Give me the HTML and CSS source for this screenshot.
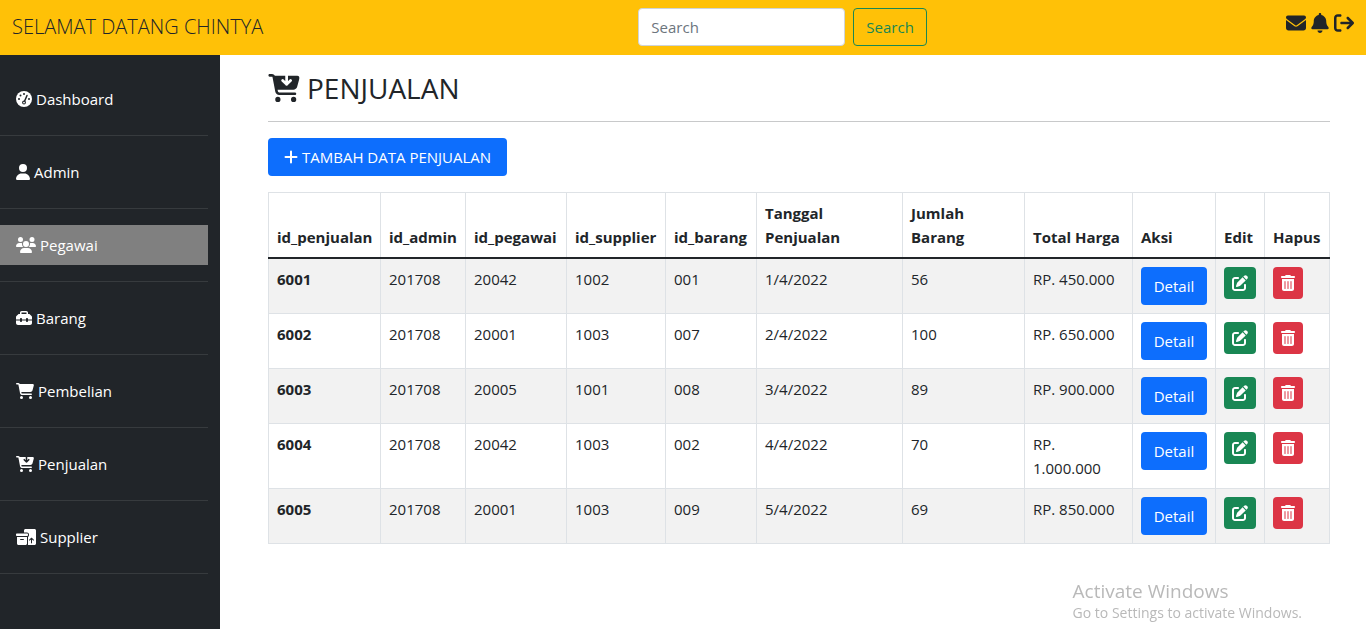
FILE: index.html
```html
<!DOCTYPE html>
<html lang="id">
<head>
<meta charset="utf-8">
<meta name="viewport" content="width=device-width, initial-scale=1">
<title>Penjualan</title>
<link rel="stylesheet" href="styles.css">
</head>
<body>
<svg class="sprite" aria-hidden="true">
  <defs>
    <mask id="arrow-cut">
      <rect width="576" height="512" fill="#fff"/>
      <path d="M336 -10V190M264 118l72 72 72-72" fill="none" stroke="#000" stroke-width="50" stroke-linecap="round" stroke-linejoin="round"/>
    </mask>
    <mask id="gauge-cut">
      <rect width="512" height="512" fill="#fff"/>
      <circle cx="256" cy="96" r="32"/><circle cx="144" cy="144" r="32"/><circle cx="96" cy="256" r="32"/><circle cx="416" cy="256" r="32"/>
      <circle cx="256" cy="368" r="62"/>
      <path d="M256 368L352 144" stroke="#000" stroke-width="48" stroke-linecap="round"/>
    </mask>
  </defs>
  <symbol id="envelope" viewBox="0 0 512 512"><path d="M48 64C21.5 64 0 85.5 0 112c0 15.1 7.1 29.3 19.2 38.4L236.8 313.6c11.4 8.5 27 8.5 38.4 0L492.8 150.4c12.1-9.1 19.2-23.3 19.2-38.4c0-26.5-21.5-48-48-48H48zM0 176V384c0 35.3 28.7 64 64 64H448c35.3 0 64-28.7 64-64V176L294.4 339.2c-22.8 17.1-54 17.1-76.8 0L0 176z"/></symbol>
  <symbol id="bell" viewBox="0 0 448 512"><path d="M224 0c-17.7 0-32 14.3-32 32V51.2C119 66 64 130.6 64 208v18.8c0 47-17.3 92.4-48.5 127.6l-7.4 8.3c-8.4 9.4-10.4 22.9-5.3 34.4S19.4 416 32 416H416c12.6 0 24-7.4 29.2-18.9s3.1-25-5.3-34.4l-7.4-8.3C401.3 319.2 384 273.9 384 226.8V208c0-77.4-55-142-128-156.8V32c0-17.7-14.3-32-32-32zm45.3 493.3c12-12 18.7-28.3 18.7-45.3H160c0 17 6.7 33.3 18.7 45.3s28.3 18.7 45.3 18.7s33.3-6.7 45.3-18.7z"/></symbol>
  <symbol id="sign-out" viewBox="0 0 512 512"><path d="M502.6 278.6c12.5-12.5 12.5-32.8 0-45.3l-128-128c-12.5-12.5-32.8-12.5-45.3 0s-12.5 32.8 0 45.3L402.7 224 192 224c-17.7 0-32 14.3-32 32s14.3 32 32 32l210.7 0-73.4 73.4c-12.5 12.5-12.5 32.8 0 45.3s32.8 12.5 45.3 0l128-128zM160 96c17.7 0 32-14.3 32-32s-14.3-32-32-32L96 32C43 32 0 75 0 128L0 384c0 53 43 96 96 96l64 0c17.7 0 32-14.3 32-32s-14.3-32-32-32l-64 0c-17.7 0-32-14.3-32-32l0-256c0-17.7 14.3-32 32-32l64 0z"/></symbol>
  <symbol id="gauge" viewBox="0 0 512 512"><circle cx="256" cy="256" r="256" mask="url(#gauge-cut)"/><circle cx="256" cy="368" r="28"/></symbol>
  <symbol id="user" viewBox="0 0 448 512"><path d="M224 256A128 128 0 1 0 224 0a128 128 0 1 0 0 256zm-45.7 48C79.8 304 0 383.8 0 482.3C0 498.7 13.3 512 29.7 512H418.3c16.4 0 29.7-13.3 29.7-29.7C448 383.8 368.2 304 269.7 304H178.3z"/></symbol>
  <symbol id="users" viewBox="0 0 640 512"><path d="M144 0a80 80 0 1 1 0 160A80 80 0 1 1 144 0zM512 0a80 80 0 1 1 0 160A80 80 0 1 1 512 0zM0 298.7C0 239.8 47.8 192 106.7 192h42.7c15.9 0 31 3.5 44.6 9.7c-1.3 7.2-1.9 14.7-1.9 22.3c0 38.2 16.8 72.5 43.3 96H21.3C9.6 320 0 310.4 0 298.7zM405.3 320c26-23.5 42.6-57.8 42.6-96c0-7.6-.7-15-1.9-22.3c13.6-6.3 28.7-9.7 44.6-9.7h42.7C592.2 192 640 239.8 640 298.7c0 11.8-9.6 21.3-21.3 21.3H405.3zM224 224a96 96 0 1 1 192 0 96 96 0 1 1 -192 0zM128 485.3C128 411.7 187.7 352 261.3 352H378.7C452.3 352 512 411.7 512 485.3c0 14.7-11.9 26.7-26.7 26.7H154.7c-14.7 0-26.7-11.9-26.7-26.7z"/></symbol>
  <symbol id="toolbox" viewBox="0 0 512 512"><path d="M176 88v40H336V88c0-4.4-3.6-8-8-8H184c-4.4 0-8 3.6-8 8zm-48 40V88c0-30.9 25.1-56 56-56H328c30.9 0 56 25.1 56 56v40h28.1c12.7 0 24.9 5.1 33.9 14.1l51.9 51.9c9 9 14.1 21.2 14.1 33.9V304H384V288c0-17.7-14.3-32-32-32s-32 14.3-32 32v16H192V288c0-17.7-14.3-32-32-32s-32 14.3-32 32v16H0V227.9c0-12.7 5.1-24.9 14.1-33.9l51.9-51.9c9-9 21.2-14.1 33.9-14.1H128zM0 416V336H128v16c0 17.7 14.3 32 32 32s32-14.3 32-32V336H320v16c0 17.7 14.3 32 32 32s32-14.3 32-32V336H512v80c0 35.3-28.7 64-64 64H64c-35.3 0-64-28.7-64-64z"/></symbol>
  <symbol id="cart" viewBox="0 0 576 512"><path d="M0 24C0 10.7 10.7 0 24 0H69.5c22 0 41.5 12.8 50.6 32h411c26.3 0 45.5 25 38.6 50.4l-41 152.3c-8.5 31.4-37 53.3-69.5 53.3H170.7l5.4 28.5c2.2 11.3 12.1 19.5 23.6 19.5H488c13.3 0 24 10.7 24 24s-10.7 24-24 24H199.7c-34.6 0-64.3-24.6-70.7-58.5L77.4 54.5c-.7-3.8-4-6.5-7.9-6.5H24C10.7 48 0 37.3 0 24zM128 464a48 48 0 1 1 96 0 48 48 0 1 1 -96 0zm336-48a48 48 0 1 1 0 96 48 48 0 1 1 0-96z"/></symbol>
  <symbol id="cart-down" viewBox="0 0 576 512"><g mask="url(#arrow-cut)"><path d="M0 24C0 10.7 10.7 0 24 0H69.5c22 0 41.5 12.8 50.6 32h411c26.3 0 45.5 25 38.6 50.4l-41 152.3c-8.5 31.4-37 53.3-69.5 53.3H170.7l5.4 28.5c2.2 11.3 12.1 19.5 23.6 19.5H488c13.3 0 24 10.7 24 24s-10.7 24-24 24H199.7c-34.6 0-64.3-24.6-70.7-58.5L77.4 54.5c-.7-3.8-4-6.5-7.9-6.5H24C10.7 48 0 37.3 0 24zM128 464a48 48 0 1 1 96 0 48 48 0 1 1 -96 0zm336-48a48 48 0 1 1 0 96 48 48 0 1 1 0-96z"/></g></symbol>
  <symbol id="boxes" viewBox="0 0 640 512"><path fill-rule="evenodd" d="M256 48c0-26 22-48 48-48H592c26 0 48 22 48 48V464c0 26-22 48-48 48H381c2-5 3-10 3-16V253c19-11 32-32 32-56V176c0-35-29-64-64-64H256V48zM571 347l-64-64c-6-6-16-6-22 0l-64 64c-6 6-6 16 0 22s16 6 22 0l37-37V448c0 9 7 16 16 16s16-7 16-16V332l37 37c6 6 16 6 22 0s6-16 0-22zM32 144H352c18 0 32 14 32 32v16c0 18-14 32-32 32H32c-18 0-32-14-32-32V176c0-18 14-32 32-32zM32 256H352V464c0 26-22 48-48 48H80c-26 0-48-22-48-48V256zM144 320c-9 0-16 7-16 16s7 16 16 16h96c9 0 16-7 16-16s-7-16-16-16H144z"/></symbol>
  <symbol id="plus" viewBox="0 0 448 512"><path d="M224 80V432M48 256H400" fill="none" stroke="currentColor" stroke-width="64" stroke-linecap="round"/></symbol>
  <symbol id="edit" viewBox="0 0 512 512"><path d="M471.6 21.7c-21.9-21.9-57.3-21.9-79.2 0L362.3 51.7l97.9 97.9 30.1-30.1c21.9-21.9 21.9-57.3 0-79.2L471.6 21.7zm-299.2 220c-6.1 6.1-10.8 13.6-13.5 21.9l-29.6 88.8c-2.9 8.6-.6 18.1 5.8 24.6s15.9 8.7 24.6 5.8l88.8-29.6c8.2-2.7 15.7-7.4 21.9-13.5L437.7 172.3 339.7 74.3 172.4 241.7zM96 64C43 64 0 107 0 160V416c0 53 43 96 96 96H352c53 0 96-43 96-96V320c0-17.7-14.3-32-32-32s-32 14.3-32 32v96c0 17.7-14.3 32-32 32H96c-17.7 0-32-14.3-32-32V160c0-17.7 14.3-32 32-32h96c17.7 0 32-14.3 32-32s-14.3-32-32-32H96z"/></symbol>
  <symbol id="trash" viewBox="0 0 448 512"><path fill-rule="evenodd" d="M135.2 17.7L128 32H32C14.3 32 0 46.3 0 64S14.3 96 32 96H416c17.7 0 32-14.3 32-32s-14.3-32-32-32H320l-7.2-14.3C307.4 6.8 296.3 0 284.2 0H163.8c-12.1 0-23.2 6.8-28.6 17.7zM32 128V448c0 35 29 64 64 64H352c35 0 64-29 64-64V128H32zM112 208a16 16 0 0 1 32 0V432a16 16 0 0 1-32 0zM208 208a16 16 0 0 1 32 0V432a16 16 0 0 1-32 0zM304 208a16 16 0 0 1 32 0V432a16 16 0 0 1-32 0z"/></symbol>
</svg>

<header class="topbar">
  <a class="brand" href="#">SELAMAT DATANG CHINTYA</a>
  <form class="search">
    <input class="search-input" type="search" placeholder="Search" aria-label="Search">
    <button class="btn btn-outline" type="submit">Search</button>
  </form>
  <div class="quick">
    <a href="#" aria-label="Pesan"><svg class="icon icon-20"><use href="#envelope"/></svg></a>
    <a href="#" aria-label="Notifikasi"><svg class="icon icon-18"><use href="#bell"/></svg></a>
    <a href="#" aria-label="Keluar"><svg class="icon icon-20"><use href="#sign-out"/></svg></a>
  </div>
</header>

<div class="layout">
  <aside class="sidebar">
    <nav>
      <ul class="menu">
        <li><a href="#"><svg class="icon menu-16"><use href="#gauge"/></svg>Dashboard</a></li>
        <li><a href="#"><svg class="icon menu-14"><use href="#user"/></svg>Admin</a></li>
        <li><a class="active" href="#"><svg class="icon menu-20"><use href="#users"/></svg>Pegawai</a></li>
        <li><a href="#"><svg class="icon menu-16"><use href="#toolbox"/></svg>Barang</a></li>
        <li><a href="#"><svg class="icon menu-18"><use href="#cart"/></svg>Pembelian</a></li>
        <li><a href="#"><svg class="icon menu-18"><use href="#cart-down"/></svg>Penjualan</a></li>
        <li><a href="#"><svg class="icon menu-20"><use href="#boxes"/></svg>Supplier</a></li>
      </ul>
    </nav>
  </aside>

  <main class="content">
    <h1 class="title"><svg class="icon title-icon"><use href="#cart-down"/></svg>PENJUALAN</h1>
    <hr class="rule">
    <a class="btn btn-primary add" href="#"><svg class="icon menu-14"><use href="#plus"/></svg>TAMBAH DATA PENJUALAN</a>
    <table class="data">
      <colgroup>
        <col class="c-id"><col class="c-admin"><col class="c-pegawai"><col class="c-supplier"><col class="c-barang"><col class="c-tanggal"><col class="c-jumlah"><col class="c-total"><col class="c-aksi"><col class="c-edit"><col class="c-hapus">
      </colgroup>
      <thead>
        <tr><th scope="col">id_penjualan</th><th scope="col">id_admin</th><th scope="col">id_pegawai</th><th scope="col">id_supplier</th><th scope="col">id_barang</th><th scope="col">Tanggal<br>Penjualan</th><th scope="col">Jumlah<br>Barang</th><th scope="col">Total Harga</th><th scope="col">Aksi</th><th scope="col">Edit</th><th scope="col">Hapus</th></tr>
      </thead>
      <tbody>
        <tr><th scope="row">6001</th><td>201708</td><td>20042</td><td>1002</td><td>001</td><td>1/4/2022</td><td>56</td><td>RP. 450.000</td><td><button class="btn btn-primary" type="button">Detail</button></td><td><button class="square edit" type="button" aria-label="Edit"><svg class="icon menu-16"><use href="#edit"/></svg></button></td><td><button class="square delete" type="button" aria-label="Hapus"><svg class="icon menu-14"><use href="#trash"/></svg></button></td></tr>
        <tr><th scope="row">6002</th><td>201708</td><td>20001</td><td>1003</td><td>007</td><td>2/4/2022</td><td>100</td><td>RP. 650.000</td><td><button class="btn btn-primary" type="button">Detail</button></td><td><button class="square edit" type="button" aria-label="Edit"><svg class="icon menu-16"><use href="#edit"/></svg></button></td><td><button class="square delete" type="button" aria-label="Hapus"><svg class="icon menu-14"><use href="#trash"/></svg></button></td></tr>
        <tr><th scope="row">6003</th><td>201708</td><td>20005</td><td>1001</td><td>008</td><td>3/4/2022</td><td>89</td><td>RP. 900.000</td><td><button class="btn btn-primary" type="button">Detail</button></td><td><button class="square edit" type="button" aria-label="Edit"><svg class="icon menu-16"><use href="#edit"/></svg></button></td><td><button class="square delete" type="button" aria-label="Hapus"><svg class="icon menu-14"><use href="#trash"/></svg></button></td></tr>
        <tr><th scope="row">6004</th><td>201708</td><td>20042</td><td>1003</td><td>002</td><td>4/4/2022</td><td>70</td><td>RP. 1.000.000</td><td><button class="btn btn-primary" type="button">Detail</button></td><td><button class="square edit" type="button" aria-label="Edit"><svg class="icon menu-16"><use href="#edit"/></svg></button></td><td><button class="square delete" type="button" aria-label="Hapus"><svg class="icon menu-14"><use href="#trash"/></svg></button></td></tr>
        <tr><th scope="row">6005</th><td>201708</td><td>20001</td><td>1003</td><td>009</td><td>5/4/2022</td><td>69</td><td>RP. 850.000</td><td><button class="btn btn-primary" type="button">Detail</button></td><td><button class="square edit" type="button" aria-label="Edit"><svg class="icon menu-16"><use href="#edit"/></svg></button></td><td><button class="square delete" type="button" aria-label="Hapus"><svg class="icon menu-14"><use href="#trash"/></svg></button></td></tr>
      </tbody>
    </table>
  </main>
</div>

<div class="watermark">
  <p class="watermark-title">Activate Windows</p>
  <p class="watermark-text">Go to Settings to activate Windows.</p>
</div>
</body>
</html>
```
FILE: styles.css
```css
*, *::before, *::after { box-sizing: border-box; }

body {
  margin: 0;
  min-height: 100vh;
  display: flex;
  flex-direction: column;
  background: #fff;
  color: #212529;
  font: 400 15px/24px "Open Sans", "Noto Sans", sans-serif;
}

a { color: inherit; text-decoration: none; }
.sprite { position: absolute; width: 0; height: 0; }
.icon { display: block; flex: none; height: 16px; fill: currentColor; }
.menu-14 { width: 14px; }
.menu-16 { width: 16px; }
.menu-18 { width: 18px; }
.menu-20 { width: 20px; }

.topbar {
  display: flex;
  align-items: center;
  justify-content: space-between;
  padding: 8px 12px 9px;
  background: #ffc107;
}
.brand { margin-right: 16px; font-size: 20px; font-weight: 300; line-height: 32px; }
.search { display: flex; gap: 8px; }
.search-input {
  width: 207px;
  height: 38px;
  padding: 6px 12px;
  border: 1px solid #ced4da;
  border-radius: 4px;
  background: #fff;
  font: inherit;
}
.search-input::placeholder { color: #6c757d; opacity: 1; }
.quick { display: flex; gap: 5px; padding-bottom: 8px; }
.icon-18 { width: 18px; height: 20px; }
.icon-20 { width: 20px; height: 20px; }

.btn {
  display: inline-flex;
  align-items: center;
  justify-content: center;
  gap: 4px;
  height: 38px;
  padding: 6px 12px;
  border: 1px solid transparent;
  border-radius: 4px;
  font: inherit;
  white-space: nowrap;
  cursor: pointer;
}
.btn-outline { border-color: #198754; background: transparent; color: #198754; }
.btn-primary { background: #0d6efd; color: #fff; }
.add { padding: 6px 15px; }

.layout { display: flex; flex: 1; }
.sidebar { flex: none; width: 220px; padding: 24px 12px 0 0; background: #212529; color: #fff; }
.menu { margin: 0; padding: 0; list-style: none; }
.menu li { padding-bottom: 16px; margin-bottom: 16px; border-bottom: 1px solid #373b3e; }
.menu a { display: flex; align-items: center; gap: 4px; padding: 8px 16px; }
.menu .active { background: #808080; }

.content { flex: 1; min-width: 0; padding: 16px 36px 24px 48px; }
.title { display: flex; align-items: center; gap: 7px; margin: 0; font-size: 28px; font-weight: 500; line-height: 34px; }
.title-icon { width: 32px; height: 28px; }
.rule { margin: 16px 0; border: 0; border-top: 1px solid #c8c9ca; }

.data { width: 100%; margin: 16px 0 0; table-layout: fixed; border-collapse: collapse; }
.data th, .data td { padding: 8px; border: 1px solid #dee2e6; text-align: left; vertical-align: top; }
.data th { font-weight: 700; }
.data thead th { vertical-align: bottom; border-bottom: 2px solid #212529; }
.data tbody tr:nth-child(odd) { background: #f2f2f2; }
.data .btn { display: flex; width: 100%; }
.c-id { width: 112px; }
.c-admin { width: 85px; }
.c-pegawai { width: 101px; }
.c-supplier { width: 99px; }
.c-barang { width: 91px; }
.c-tanggal { width: 146px; }
.c-jumlah { width: 122px; }
.c-total { width: 108px; }
.c-aksi { width: 83px; }
.c-edit { width: 49px; }
.c-hapus { width: 65px; }

.square { display: flex; padding: 8px; border: 0; border-radius: 4px; color: #fff; cursor: pointer; }
.edit { background: #198754; }
.delete { background: #dc3545; }

.watermark { position: fixed; right: 64px; bottom: 6px; color: #b9b9b9; pointer-events: none; }
.watermark p { margin: 0; }
.watermark-title { font-size: 19px; line-height: 24px; }
.watermark-text { font-size: 14px; line-height: 20px; }
```
